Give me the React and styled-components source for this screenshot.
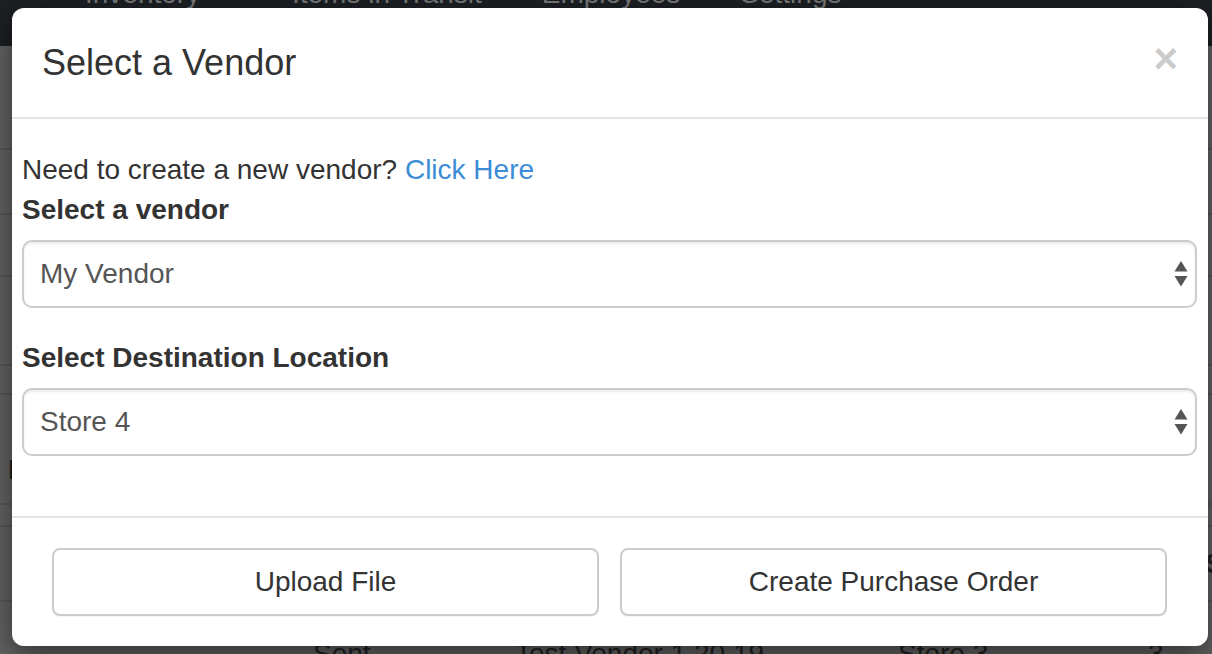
import styled, { createGlobalStyle } from 'styled-components';

const GlobalStyle = createGlobalStyle`
  html, body {
    margin: 0;
    height: 100%;
    overflow: hidden;
  }
  body {
    font-family: "Liberation Sans", Arial, sans-serif;
    background: #636363;
  }
`;

const Page = styled.div`
  position: relative;
  height: 654px;
  overflow: hidden;
`;

const Navbar = styled.nav`
  height: 46px;
  background: #1c1f23;
  overflow: hidden;
`;

const NavList = styled.ul`
  display: flex;
  list-style: none;
  margin: -26px 0 0 55px;
  padding: 0;
`;

const NavLink = styled.li`
  padding: 0 30px;
  font-size: 28px;
  line-height: 40px;
  color: #777;
  white-space: nowrap;
`;

const Caret = styled.span`
  display: inline-block;
  width: 0;
  height: 0;
  margin-left: 8px;
  vertical-align: middle;
  border-top: 8px solid #777;
  border-left: 8px solid transparent;
  border-right: 8px solid transparent;
`;

const Table = styled.div`
  display: flex;
  flex-direction: column;
`;

const Row = styled.div`
  height: ${(p) => p.$h}px;
  border-bottom: 2px solid #575757;
  display: grid;
  grid-template-columns: 313px 202px 383px 250px 1fr;
  align-items: ${(p) => (p.$top ? 'start' : 'center')};
  padding-top: ${(p) => p.$pt || 0}px;
  box-sizing: border-box;
  font-size: 28px;
  line-height: 40px;
  color: #222;
  white-space: nowrap;
`;

const Cell = styled.div`
  grid-column: ${(p) => p.$col};
  font-weight: ${(p) => (p.$bold ? 700 : 400)};
  padding-left: ${(p) => p.$pl || 0}px;
`;

const Modal = styled.div`
  position: absolute;
  top: 8px;
  left: 12px;
  width: 1196px;
  background: #fff;
  border-radius: 12px;
  box-shadow: 0 10px 30px rgba(0, 0, 0, 0.5);
  display: flex;
  flex-direction: column;
  color: #333;
`;

const Header = styled.div`
  display: flex;
  justify-content: space-between;
  align-items: flex-start;
  padding: 30px 30px 29px;
  border-bottom: 2px solid #e5e5e5;
`;

const Title = styled.h4`
  margin: 0;
  font-size: 36px;
  line-height: 50px;
  font-weight: 500;
  color: #333;
`;

const Close = styled.button`
  border: 0;
  background: none;
  padding: 0;
  margin-top: 0;
  font-family: inherit;
  font-size: 42px;
  font-weight: 700;
  line-height: 1;
  color: #000;
  opacity: 0.2;
  cursor: pointer;
`;

const Body = styled.div`
  padding: 31px 11px 30px 10px;
  font-size: 28px;
  line-height: 40px;
`;

const Link = styled.a`
  color: #3c8dd5;
  text-decoration: none;
`;

const FormGroup = styled.div`
  display: flex;
  flex-direction: column;
  margin-bottom: 30px;
`;

const Label = styled.label`
  font-weight: 700;
  margin-bottom: 10px;
`;

const SelectBox = styled.div`
  height: 68px;
  box-sizing: border-box;
  border: 2px solid #ccc;
  border-radius: 10px;
  box-shadow: inset 0 2px 2px rgba(0, 0, 0, 0.075);
  display: flex;
  align-items: center;
  justify-content: space-between;
  padding: 0 7px 0 16px;
  color: #555;
`;

const Footer = styled.div`
  border-top: 2px solid #e5e5e5;
  padding: 30px 41px 30px 40px;
  display: grid;
  grid-template-columns: 1fr 1fr;
  gap: 21px;
`;

const Button = styled.button`
  height: 68px;
  font-family: inherit;
  font-size: 28px;
  color: #333;
  background: #fff;
  border: 2px solid #ccc;
  border-radius: 8px;
  box-shadow: 0 1px 1px rgba(0, 0, 0, 0.05);
  cursor: pointer;
`;

const SelectArrows = () => (
  <svg width="14" height="26" viewBox="0 0 14 26">
    <path d="M7 0 L13.5 10.5 H0.5 Z" fill="#555" />
    <path d="M0.5 15 H13.5 L7 25.5 Z" fill="#555" />
  </svg>
);

const Select = ({ value }) => (
  <SelectBox>
    <span>{value}</span>
    <SelectArrows />
  </SelectBox>
);

export default function App() {
  return (
    <Page>
      <GlobalStyle />
      <Navbar>
        <NavList>
          <NavLink>
            Inventory <Caret />
          </NavLink>
          <NavLink>Items in Transit</NavLink>
          <NavLink>Employees</NavLink>
          <NavLink>
            Settings <Caret />
          </NavLink>
        </NavList>
      </Navbar>
      <Table>
        <Row $h={104} />
        <Row $h={65} />
        <Row $h={62} />
        <Row $h={89} />
        <Row $h={29} />
        <Row $h={110} $top $pt={55}>
          <Cell $col="1" $bold $pl={8}>Purchase Orders</Cell>
        </Row>
        <Row $h={22} />
        <Row $h={75}>
          <Cell $col="5" $bold $pl={57}>Status</Cell>
        </Row>
        <Row $h={60} $top $pt={32}>
          <Cell $col="2">Sent</Cell>
          <Cell $col="3">Test Vendor 1 20 19</Cell>
          <Cell $col="4">Store 3</Cell>
          <Cell $col="5">3</Cell>
        </Row>
      </Table>

      <Modal>
        <Header>
          <Title>Select a Vendor</Title>
          <Close>×</Close>
        </Header>
        <Body>
          <div>
            Need to create a new vendor? <Link href="#">Click Here</Link>
          </div>
          <FormGroup>
            <Label>Select a vendor</Label>
            <Select value="My Vendor" />
          </FormGroup>
          <FormGroup>
            <Label>Select Destination Location</Label>
            <Select value="Store 4" />
          </FormGroup>
        </Body>
        <Footer>
          <Button>Upload File</Button>
          <Button>Create Purchase Order</Button>
        </Footer>
      </Modal>
    </Page>
  );
}
